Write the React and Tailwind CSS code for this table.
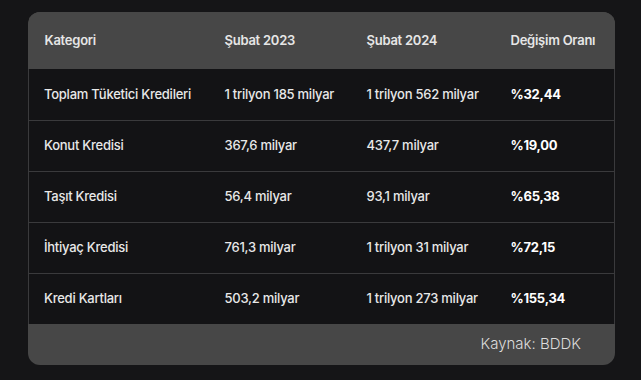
import React from 'react';

const rows = [
  ['Toplam Tüketici Kredileri', '1 trilyon 185 milyar', '1 trilyon 562 milyar', '%32,44'],
  ['Konut Kredisi', '367,6 milyar', '437,7 milyar', '%19,00'],
  ['Taşıt Kredisi', '56,4 milyar', '93,1 milyar', '%65,38'],
  ['İhtiyaç Kredisi', '761,3 milyar', '1 trilyon 31 milyar', '%72,15'],
  ['Kredi Kartları', '503,2 milyar', '1 trilyon 273 milyar', '%155,34'],
];

export default function App() {
  return (
    <div
      className="w-[641px] h-[380px] bg-[#151517] pt-[12px] pl-[28px]"
      style={{ fontFamily: 'Inter, "Noto Sans", sans-serif' }}
    >
      <div className="w-[587px] rounded-[12px] overflow-hidden bg-[#474747]">
        <table className="w-full border-collapse text-[13px] tracking-[-0.25px]">
          <colgroup>
            <col className="w-[180px]" />
            <col className="w-[142px]" />
            <col className="w-[144px]" />
            <col />
          </colgroup>
          <thead>
            <tr className="h-[57px] bg-[#474747] text-[#e6e6e6] text-left">
              <th className="pl-4 font-semibold">Kategori</th>
              <th className="pl-4 font-semibold">Şubat 2023</th>
              <th className="pl-4 font-semibold">Şubat 2024</th>
              <th className="pl-4 font-semibold">Değişim Oranı</th>
            </tr>
          </thead>
          <tbody className="bg-[#131315] text-[#e8e8e8] font-medium">
            {rows.map((r, i) => (
              <tr
                key={i}
                className={
                  'h-[51px] ' + (i < rows.length - 1 ? 'border-b border-[#3a3a3c]' : '')
                }
              >
                <td className="pl-[15px] border-l border-[#3a3a3c]">{r[0]}</td>
                <td className="pl-4">{r[1]}</td>
                <td className="pl-4">{r[2]}</td>
                <td className="pl-4 font-bold text-white border-r border-[#3a3a3c]">{r[3]}</td>
              </tr>
            ))}
          </tbody>
        </table>
        <div className="h-[41px] flex items-center justify-end pr-[34px] text-[15px] font-light text-[#dcdcdc]">
          Kaynak: BDDK
        </div>
      </div>
    </div>
  );
}
